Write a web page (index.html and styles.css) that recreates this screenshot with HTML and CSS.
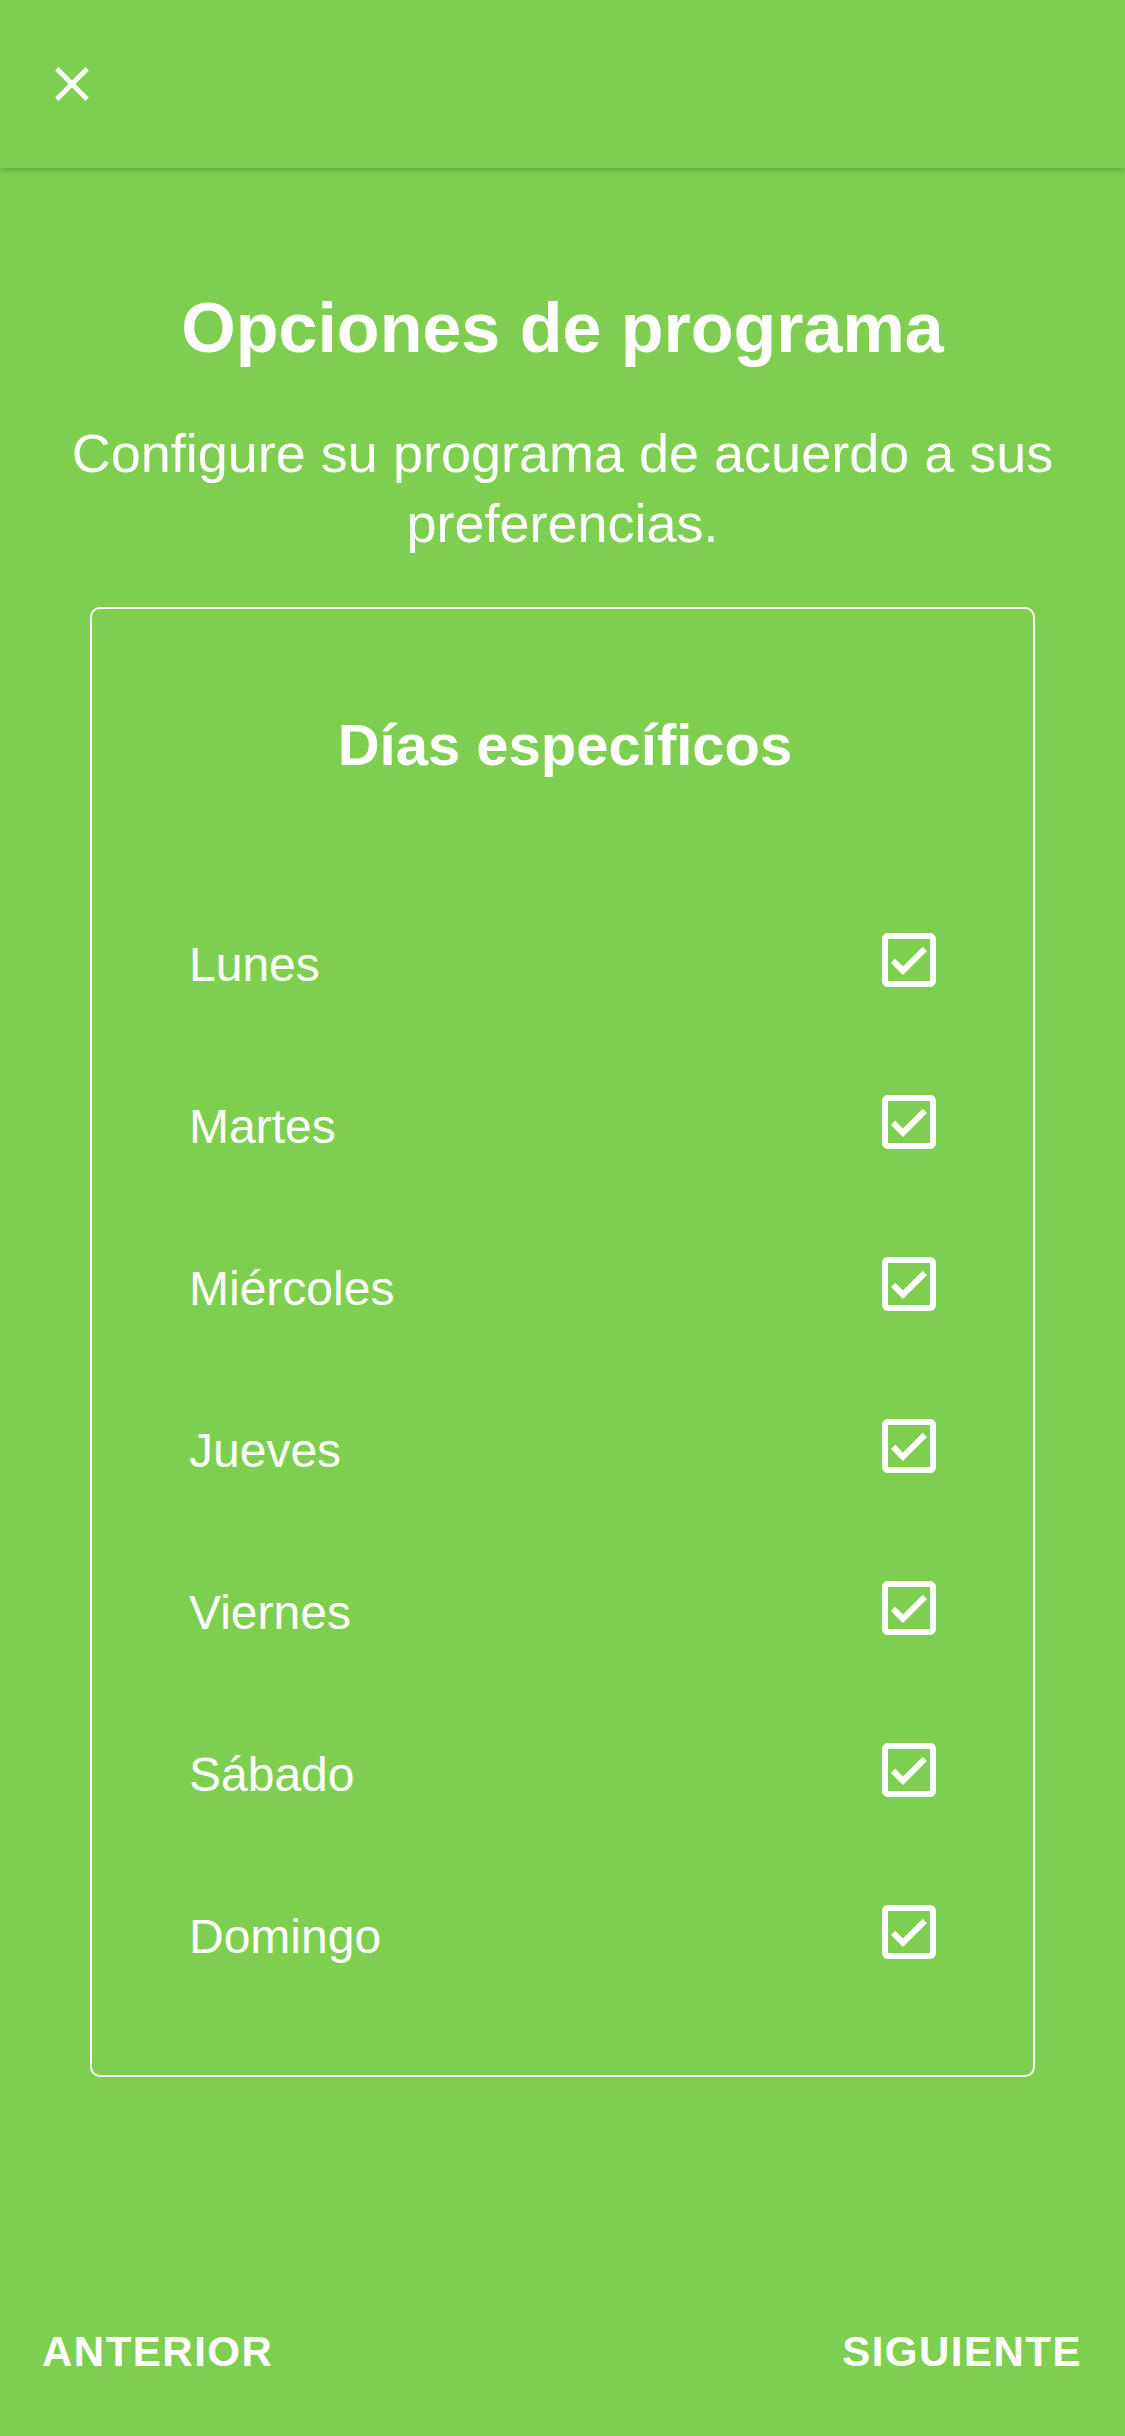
FILE: index.html
```html
<!DOCTYPE html>
<html lang="es">
<head>
  <meta charset="UTF-8" />
  <meta name="viewport" content="width=device-width, initial-scale=1.0"/>
  <title>Opciones de programa</title>
  <link rel="stylesheet" href="styles.css">
</head>
<body>
  <header class="topbar">
    <button class="close-btn" aria-label="Cerrar">
      <svg viewBox="0 0 24 24" width="58" height="58"><path fill="#fff" d="M19 6.41L17.59 5 12 10.59 6.41 5 5 6.41 10.59 12 5 17.59 6.41 19 12 13.41 17.59 19 19 17.59 13.41 12z"/></svg>
    </button>
  </header>

  <main class="content">
    <h1 class="title">Opciones de programa</h1>
    <p class="subtitle">Configure su programa de acuerdo a sus preferencias.</p>

    <section class="days-card">
      <h2 class="days-title">Días específicos</h2>
      <ul class="day-list">
        <li class="day-row"><span>Lunes</span><svg class="check" viewBox="0 0 24 24"><path d="M19 3H5c-1.11 0-2 .9-2 2v14c0 1.1.89 2 2 2h14c1.11 0 2-.9 2-2V5c0-1.1-.89-2-2-2zm0 16H5V5h14v14zM17.99 9l-1.41-1.42-6.59 6.59-2.58-2.57-1.42 1.41 4 3.99z"/></svg></li>
        <li class="day-row"><span>Martes</span><svg class="check" viewBox="0 0 24 24"><path d="M19 3H5c-1.11 0-2 .9-2 2v14c0 1.1.89 2 2 2h14c1.11 0 2-.9 2-2V5c0-1.1-.89-2-2-2zm0 16H5V5h14v14zM17.99 9l-1.41-1.42-6.59 6.59-2.58-2.57-1.42 1.41 4 3.99z"/></svg></li>
        <li class="day-row"><span>Miércoles</span><svg class="check" viewBox="0 0 24 24"><path d="M19 3H5c-1.11 0-2 .9-2 2v14c0 1.1.89 2 2 2h14c1.11 0 2-.9 2-2V5c0-1.1-.89-2-2-2zm0 16H5V5h14v14zM17.99 9l-1.41-1.42-6.59 6.59-2.58-2.57-1.42 1.41 4 3.99z"/></svg></li>
        <li class="day-row"><span>Jueves</span><svg class="check" viewBox="0 0 24 24"><path d="M19 3H5c-1.11 0-2 .9-2 2v14c0 1.1.89 2 2 2h14c1.11 0 2-.9 2-2V5c0-1.1-.89-2-2-2zm0 16H5V5h14v14zM17.99 9l-1.41-1.42-6.59 6.59-2.58-2.57-1.42 1.41 4 3.99z"/></svg></li>
        <li class="day-row"><span>Viernes</span><svg class="check" viewBox="0 0 24 24"><path d="M19 3H5c-1.11 0-2 .9-2 2v14c0 1.1.89 2 2 2h14c1.11 0 2-.9 2-2V5c0-1.1-.89-2-2-2zm0 16H5V5h14v14zM17.99 9l-1.41-1.42-6.59 6.59-2.58-2.57-1.42 1.41 4 3.99z"/></svg></li>
        <li class="day-row"><span>Sábado</span><svg class="check" viewBox="0 0 24 24"><path d="M19 3H5c-1.11 0-2 .9-2 2v14c0 1.1.89 2 2 2h14c1.11 0 2-.9 2-2V5c0-1.1-.89-2-2-2zm0 16H5V5h14v14zM17.99 9l-1.41-1.42-6.59 6.59-2.58-2.57-1.42 1.41 4 3.99z"/></svg></li>
        <li class="day-row"><span>Domingo</span><svg class="check" viewBox="0 0 24 24"><path d="M19 3H5c-1.11 0-2 .9-2 2v14c0 1.1.89 2 2 2h14c1.11 0 2-.9 2-2V5c0-1.1-.89-2-2-2zm0 16H5V5h14v14zM17.99 9l-1.41-1.42-6.59 6.59-2.58-2.57-1.42 1.41 4 3.99z"/></svg></li>
      </ul>
    </section>
  </main>

  <footer class="nav">
    <button class="nav-btn">ANTERIOR</button>
    <button class="nav-btn">SIGUIENTE</button>
  </footer>
</body>
</html>
```

FILE: styles.css
```css
* {
  margin: 0;
  padding: 0;
  box-sizing: border-box;
  font-family: 'Liberation Sans', Arial, sans-serif;
}

body {
  background: #7ecf50;
  color: #fff;
  min-height: 2436px;
  display: flex;
  flex-direction: column;
}

.topbar {
  height: 168px;
  display: flex;
  align-items: center;
  padding-left: 43px;
  background: #7ecf50;
  box-shadow: 0 3px 6px rgba(0, 0, 0, 0.18);
  position: relative;
  z-index: 1;
}

.close-btn {
  background: none;
  border: none;
  display: flex;
}

.content {
  padding: 0 60px;
}

.title {
  margin-top: 118px;
  font-size: 70px;
  line-height: 84px;
  font-weight: bold;
  text-align: center;
}

.subtitle {
  margin-top: 48px;
  font-size: 54px;
  line-height: 70px;
  text-align: center;
}

.days-card {
  margin: 49px 30px 0;
  border: 2px solid #fff;
  border-radius: 10px;
  padding: 101px 88px 62px 97px;
}

.days-title {
  font-size: 58px;
  line-height: 70px;
  font-weight: bold;
  text-align: center;
  margin-right: 4px;
}

.day-list {
  list-style: none;
  margin-top: 99px;
}

.day-row {
  height: 162px;
  display: flex;
  align-items: center;
  justify-content: space-between;
  font-size: 48px;
}

.day-row span {
  padding-top: 8px;
}

.check {
  width: 72px;
  height: 72px;
  fill: #fff;
}

.nav {
  margin-top: auto;
  display: flex;
  justify-content: space-between;
  padding: 0 43px 60px 42px;
}

.nav-btn {
  background: none;
  border: none;
  color: #fff;
  font-size: 42px;
  font-weight: bold;
  letter-spacing: 1.5px;
  cursor: pointer;
}
```
